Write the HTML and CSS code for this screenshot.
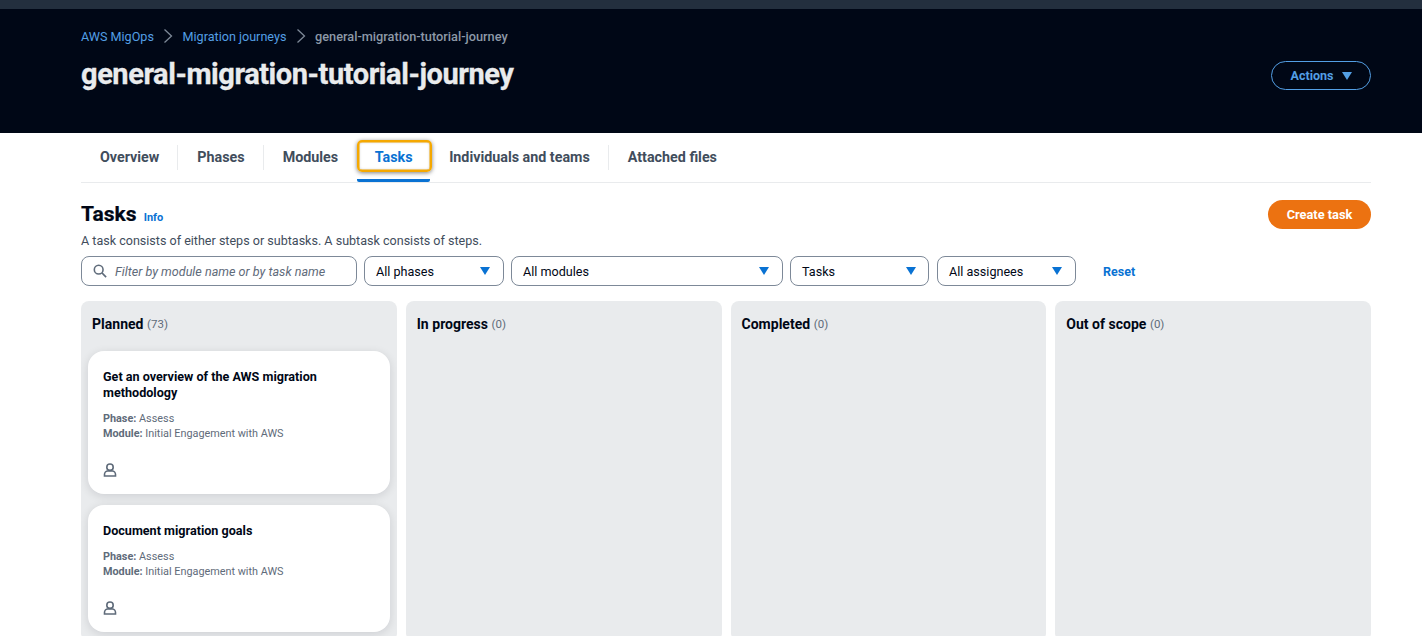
FILE: index.html
```html
<!DOCTYPE html>
<html lang="en">
<head>
<meta charset="utf-8">
<title>general-migration-tutorial-journey</title>
<link rel="stylesheet" href="styles.css">
</head>
<body>
<div class="topbar"></div>
<header class="hero">
  <div class="hero-left">
    <nav class="crumbs">
      <a class="crumb-link">AWS MigOps</a>
      <svg class="crumb-sep" viewBox="0 0 10 14"><path d="M1.5 .5l7 6.5-7 6.5" /></svg>
      <a class="crumb-link">Migration journeys</a>
      <svg class="crumb-sep" viewBox="0 0 10 14"><path d="M1.5 .5l7 6.5-7 6.5" /></svg>
      <span class="crumb-current">general-migration-tutorial-journey</span>
    </nav>
    <h1 class="title">general-migration-tutorial-journey</h1>
  </div>
  <button class="actions">Actions <svg class="caret caret-actions" viewBox="0 0 10 8"><path d="M0 0h10L5 8z"/></svg></button>
</header>
<main class="content">
  <div class="tabs">
    <div class="tab">Overview</div>
    <div class="tab">Phases</div>
    <div class="tab tab-plain">Modules</div>
    <div class="tab tab-active"><span class="tab-focus">Tasks</span></div>
    <div class="tab">Individuals and teams</div>
    <div class="tab tab-plain">Attached files</div>
  </div>
  <section class="section-head">
    <div>
      <h2 class="section-title">Tasks <a class="info">Info</a></h2>
      <p class="section-desc">A task consists of either steps or subtasks. A subtask consists of steps.</p>
    </div>
    <button class="create">Create task</button>
  </section>
  <div class="filters">
    <div class="field search">
      <svg class="search-icon" viewBox="0 0 16 16"><circle cx="6.5" cy="6.5" r="5"/><path d="M10.2 10.2L15 15"/></svg>
      <span class="placeholder">Filter by module name or by task name</span>
    </div>
    <div class="field select w-phases">All phases<svg class="caret" viewBox="0 0 10 8"><path d="M0 0h10L5 8z"/></svg></div>
    <div class="field select w-modules">All modules<svg class="caret" viewBox="0 0 10 8"><path d="M0 0h10L5 8z"/></svg></div>
    <div class="field select w-tasks">Tasks<svg class="caret" viewBox="0 0 10 8"><path d="M0 0h10L5 8z"/></svg></div>
    <div class="field select w-assignees">All assignees<svg class="caret" viewBox="0 0 10 8"><path d="M0 0h10L5 8z"/></svg></div>
    <a class="reset">Reset</a>
  </div>
  <div class="board">
    <div class="column">
      <div class="col-head">Planned <span class="count">(73)</span></div>
      <article class="card">
        <h3 class="card-title">Get an overview of the AWS migration methodology</h3>
        <p class="meta"><b>Phase:</b> Assess<br><b>Module:</b> Initial Engagement with AWS</p>
        <svg class="user" viewBox="0 0 14 14"><circle cx="7" cy="4.2" r="3.2"/><path d="M1.5 13v-1.5c0-2 1.5-3.5 3.2-3.5h4.6c1.7 0 3.2 1.5 3.2 3.5V13z"/></svg>
      </article>
      <article class="card">
        <h3 class="card-title">Document migration goals</h3>
        <p class="meta"><b>Phase:</b> Assess<br><b>Module:</b> Initial Engagement with AWS</p>
        <svg class="user" viewBox="0 0 14 14"><circle cx="7" cy="4.2" r="3.2"/><path d="M1.5 13v-1.5c0-2 1.5-3.5 3.2-3.5h4.6c1.7 0 3.2 1.5 3.2 3.5V13z"/></svg>
      </article>
    </div>
    <div class="column"><div class="col-head">In progress <span class="count">(0)</span></div></div>
    <div class="column"><div class="col-head">Completed <span class="count">(0)</span></div></div>
    <div class="column"><div class="col-head">Out of scope <span class="count">(0)</span></div></div>
  </div>
</main>
</body>
</html>
```
FILE: styles.css
```css
* { box-sizing: border-box; }
html, body { margin: 0; height: 636px; overflow: hidden; background: #fff; }
body { font-family: Roboto, "Liberation Sans", sans-serif; color: #000716; }
.topbar { height: 9px; background: #232f3e; }
.hero {
  height: 124px; background: #000716; padding: 0 51px 0 81px;
  display: flex; justify-content: space-between; align-items: flex-start;
}
.crumbs { display: flex; align-items: center; height: 18px; margin-top: 18px; font-size: 12.6px; }
.crumb-link { color: #539fe5; }
.crumb-current { color: #8d99a8; font-weight: 500; font-size: 12.75px; }
.crumb-sep { width: 10px; height: 14px; margin: 0 9.3px; fill: none; stroke: #7d8998; stroke-width: 1.3; }
.title {
  margin: 10px 0 0; font-size: 29px; line-height: 38px; font-weight: 700; color: #e9ebed;
  letter-spacing: -0.44px; -webkit-text-stroke: .3px #e9ebed;
}
.actions {
  margin-top: 52px; width: 100px; height: 29px; border: 1px solid #539fe5; border-radius: 15px;
  background: transparent; color: #539fe5; font: 700 12.5px Roboto, sans-serif;
  display: flex; align-items: center; justify-content: center; gap: 9px; padding: 0 0 0 1px;
}
.caret { width: 10px; height: 8px; fill: #0972d3; flex: none; }
.caret-actions { fill: #539fe5; }
.content { padding: 0 51px 0 81px; }
.tabs { display: flex; height: 50px; border-bottom: 1px solid #e9ebed; align-items: center; }
.tab {
  font-size: 14.3px; font-weight: 700; color: #414d5c; height: 25px; line-height: 25px;
  padding: 0 18px 0 19px; border-right: 1px solid #e9ebed; white-space: nowrap;
}
.tab-plain { border-right: 0; }
.tab-active {
  position: relative; height: 49px; line-height: 48px; width: 73px; padding: 0;
  border-right: 0; border-bottom: 3px solid #0972d3; border-radius: 0 0 2px 2px; color: #0972d3; text-align: center;
  margin-left: 1px;
}
.tab-focus {
  position: absolute; left: 0; top: 7px; width: 75px; height: 32px; line-height: 31px; padding-right: 2px;
  border: 2px solid #f5a800; border-radius: 5px;
  box-shadow: inset 0 0 0 .5px #f5a800, inset 0 0 3px rgba(0,0,0,.25), 0 1px 4px rgba(0,0,0,.5);
}
.section-head { display: flex; justify-content: space-between; align-items: flex-start; padding-top: 17px; }
.section-title { margin: 0; font-size: 21px; line-height: 28px; font-weight: 700; -webkit-text-stroke: .2px #000716; }
.info { font-size: 11px; color: #0972d3; margin-left: 2px; font-weight: 700; -webkit-text-stroke: 0; }
.section-desc { margin: 1px 0 0; font-size: 12.55px; line-height: 16px; color: #414d5c; }
.create {
  width: 103px; height: 29px; border: 0; border-radius: 15px; background: #ec7211; margin-top: 0;
  color: #fff; font: 700 12.8px Roboto, sans-serif; padding: 0;
}
.filters { display: flex; align-items: center; gap: 7px; margin-top: 7px; }
.field {
  height: 30px; border: 1px solid #7d8998; border-radius: 8px; font-size: 12.6px;
  display: flex; align-items: center; background: #fff;
}
.search { width: 276px; padding-left: 11px; gap: 8px; }
.search-icon { width: 14px; height: 14px; fill: none; stroke: #5f6b7a; stroke-width: 1.8; flex: none; }
.placeholder { font-style: italic; color: #5f6b7a; font-size: 12.6px; }
.select { justify-content: space-between; padding: 0 13px 0 11px; color: #000716; }
.w-phases { width: 140px; }
.w-modules { width: 272px; }
.w-tasks { width: 139px; padding-right: 12px; margin-right: 1px; }
.w-assignees { width: 139px; }
.reset { color: #0972d3; font-size: 12.5px; font-weight: 700; margin-left: 20px; }
.board { display: grid; grid-template-columns: repeat(4, 1fr); gap: 9px; margin-top: 15px; }
.column { background: #e9ebed; border-radius: 8px; height: 340px; padding: 0 7px; overflow: hidden; }
.col-head { font-size: 14px; font-weight: 700; line-height: 18px; padding: 14px 0 0 4px; height: 50px; letter-spacing: .02px; }
.count { font-size: 11.5px; font-weight: 400; color: #5f6b7a; vertical-align: 1px; }
.card {
  background: #fff; border-radius: 16px; padding: 18px 15px 17px; margin-bottom: 11px;
  box-shadow: 0 2px 10px rgba(0,7,22,.12);
}
.card-title { margin: 0; font-size: 12.6px; line-height: 16px; font-weight: 700; width: 240px; }
.meta { margin: 10px 0 0; font-size: 10.85px; line-height: 15px; color: #5f6b7a; }
.meta b { font-weight: 700; color: #5f6b7a; }
.user { display: block; width: 14px; height: 14px; margin-top: 22px; fill: none; stroke: #5f6b7a; stroke-width: 1.6; }
```
